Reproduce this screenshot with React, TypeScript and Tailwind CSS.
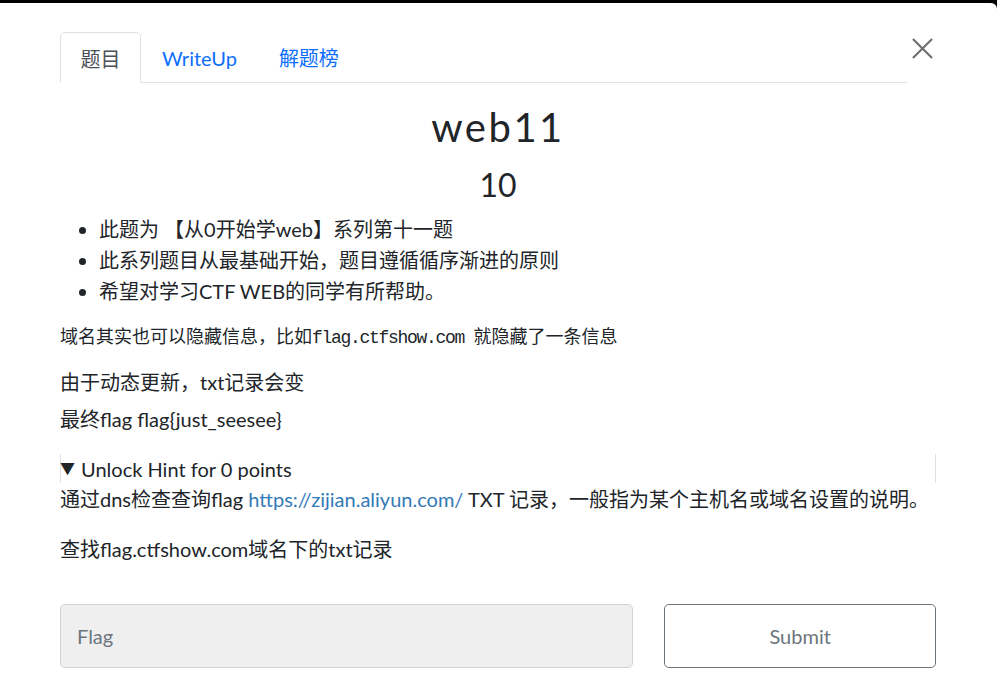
import React from "react";

const F = { fontFamily: "Lato, 'Noto Sans CJK SC', sans-serif" };

export default function App() {
  return (
    <div className="w-[997px] h-[696px] bg-black overflow-hidden" style={F}>
      <div className="mt-[3px] h-[693px] bg-white rounded-tr-[6px] text-[#212529] relative">
        <div className="pt-[29px] pl-[60px] pr-[90px]">
          <div className="flex border-b border-[#dee2e6] h-[51px]">
            <div className="w-[81px] border border-[#dee2e6] border-b-white rounded-t-[5px] flex items-center justify-center pt-[2px] text-[20px] text-[#495057] -mb-px bg-white">题目</div>
            <div className="px-[21px] flex items-center pt-[2px] text-[20px] text-[#0d6efd]">WriteUp</div>
            <div className="px-[21px] flex items-center pt-[2px] text-[20px] text-[#0d6efd]">解题榜</div>
          </div>
        </div>
        <button className="absolute left-[911px] top-[34px] w-[23px] h-[23px]">
          <svg viewBox="0 0 24 24" width="23" height="23" stroke="#6e6e6e" strokeWidth="2.2" fill="none">
            <path d="M2 2 L22 22 M22 2 L2 22" />
          </svg>
        </button>
        <div className="px-[60px] pr-[61px]">
          <h1 className="text-center text-[40px] leading-[48px] mt-[20px] tracking-[2.5px]">web11</h1>
          <div className="text-center text-[32px] leading-[40px] mt-[14px]">10</div>
          <ul className="list-disc pl-[39px] mt-[9px] text-[20px] leading-[31px]">
            <li>此题为 【从0开始学web】系列第十一题</li>
            <li>此系列题目从最基础开始，题目遵循循序渐进的原则</li>
            <li>希望对学习CTF WEB的同学有所帮助。</li>
          </ul>
          <div className="mt-[19px] text-[18px] leading-[24px]" style={{ fontFamily: "'Liberation Mono', 'Noto Sans CJK SC', monospace" }}>
            域名其实也可以隐藏信息，比如<span className="tracking-[-1.3px]">flag.ctfshow.com </span> 就隐藏了一条信息
          </div>
          <p className="mt-[19px] text-[20px] leading-[26px]">由于动态更新，txt记录会变</p>
          <p className="mt-[11px] text-[20px] leading-[26px]">最终flag flag{"{"}just_seesee{"}"}</p>
          <div className="mt-[22px] border-x border-[#dee2e6] h-[29px] flex items-center text-[20px]">
            <span className="-ml-px text-[15px] mr-[6px] leading-none">▼</span>
            <span>Unlock Hint for 0 points</span>
          </div>
          <p className="text-[20px] leading-[30px] mt-[1px]">
            通过dns检查查询flag <span className="text-[#337ab7]">https://zijian.aliyun.com/</span> TXT 记录，一般指为某个主机名或域名设置的说明。
          </p>
          <p className="text-[20px] leading-[30px] mt-[20px]">查找flag.ctfshow.com域名下的txt记录</p>
          <div className="flex mt-[40px] gap-[31px]">
            <div className="w-[574px] h-[64px] bg-[#efefef] border border-[#ced4da] rounded-[5px] flex items-center pl-[16px] text-[20px] text-[#6c757d]">Flag</div>
            <div className="w-[272px] h-[64px] border border-[#6c757d] rounded-[5px] flex items-center justify-center text-[20px] text-[#6c757d]">Submit</div>
          </div>
        </div>
      </div>
    </div>
  );
}
